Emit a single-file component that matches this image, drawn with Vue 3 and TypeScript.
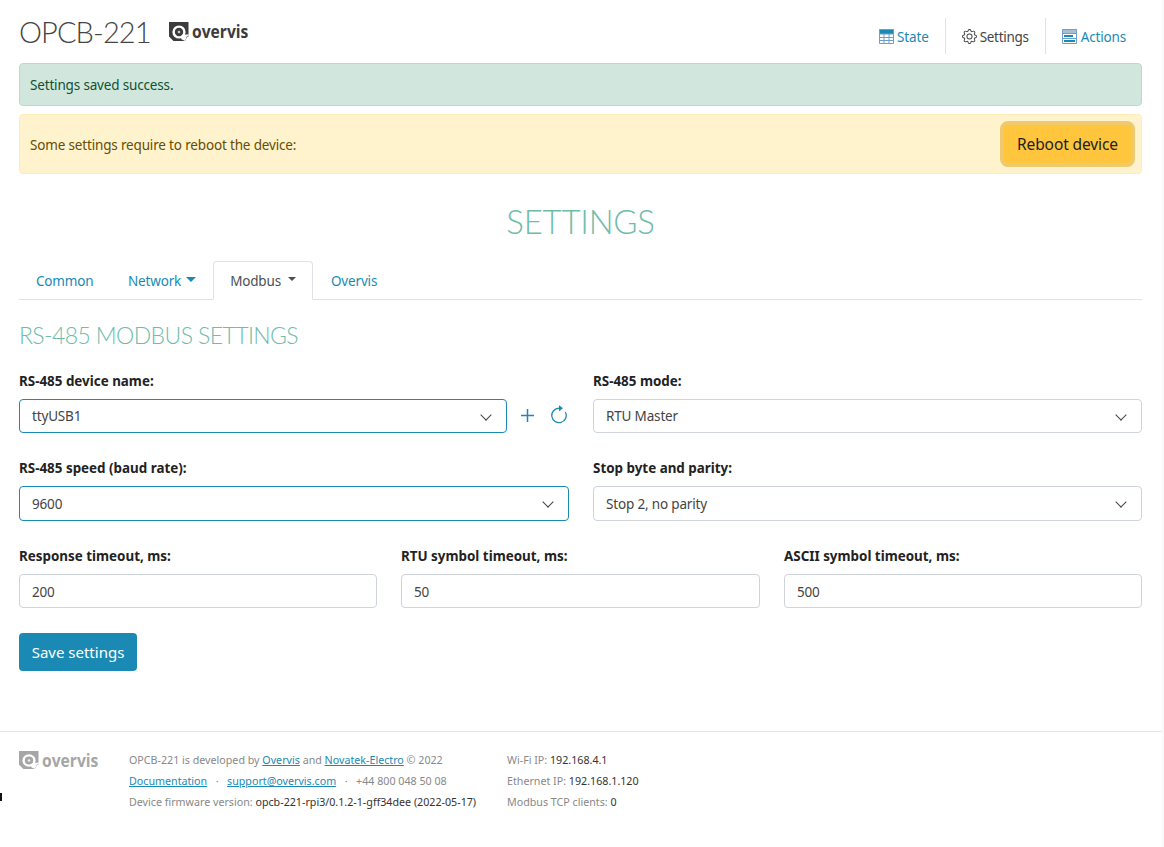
<script setup lang="ts">
const tabs = [
  { label: 'Common', drop: false, active: false },
  { label: 'Network', drop: true, active: false },
  { label: 'Modbus', drop: true, active: true },
  { label: 'Overvis', drop: false, active: false },
]
</script>

<template>
  <div class="page">
    <div class="main">
      <header class="topbar">
        <div class="brand">
          <span class="title">OPCB-221</span>
          <span class="logo">
            <svg viewBox="0 0 20 19" width="20" height="19">
              <path fill="#3c3c3c" d="M0 0h19.5v14.5h-1.2L16 19H4.5L0 14.5z" />
              <circle cx="10" cy="10" r="6.6" fill="#fff" />
              <path fill="#fff" d="M14 13l5.6-.8v1.6l-1.6.2-2 5-4-2z" />
              <circle cx="10" cy="10" r="4.2" fill="#3c3c3c" />
              <circle cx="10" cy="10" r="1.3" fill="#ccc" />
            </svg>
            <span class="logo-word">overvis</span>
          </span>
        </div>
        <nav class="topnav">
          <a class="topnav-item link">
            <svg viewBox="0 0 15 15" width="15" height="15"><path fill="#1a8ab5" d="M0 .5h15V5H0z"/><path fill="none" stroke="#6f9fc8" d="M.5.5h14v14H.5zM.5 5h14M.5 8.5h14M.5 11.5h14M5 5v9.5M10 5v9.5"/></svg>
            State
          </a>
          <a class="topnav-item current">
            <svg viewBox="0 0 16 16" width="15" height="15" fill="#444">
              <path d="M8 4.754a3.246 3.246 0 1 0 0 6.492 3.246 3.246 0 0 0 0-6.492zM5.754 8a2.246 2.246 0 1 1 4.492 0 2.246 2.246 0 0 1-4.492 0z"/>
              <path d="M9.796 1.343c-.527-1.79-3.065-1.79-3.592 0l-.094.319a.873.873 0 0 1-1.255.52l-.292-.16c-1.64-.892-3.433.902-2.54 2.541l.159.292a.873.873 0 0 1-.52 1.255l-.319.094c-1.79.527-1.79 3.065 0 3.592l.319.094a.873.873 0 0 1 .52 1.255l-.16.292c-.892 1.64.901 3.434 2.541 2.54l.292-.159a.873.873 0 0 1 1.255.52l.094.319c.527 1.79 3.065 1.79 3.592 0l.094-.319a.873.873 0 0 1 1.255-.52l.292.16c1.64.893 3.434-.902 2.54-2.541l-.159-.292a.873.873 0 0 1 .52-1.255l.319-.094c1.79-.527 1.79-3.065 0-3.592l-.319-.094a.873.873 0 0 1-.52-1.255l.16-.292c.893-1.64-.902-3.433-2.541-2.54l-.292.159a.873.873 0 0 1-1.255-.52l-.094-.319zm-2.633.283c.246-.835 1.428-.835 1.674 0l.094.319a1.873 1.873 0 0 0 2.693 1.115l.291-.16c.764-.415 1.6.42 1.184 1.185l-.159.292a1.873 1.873 0 0 0 1.116 2.692l.318.094c.835.246.835 1.428 0 1.674l-.319.094a1.873 1.873 0 0 0-1.115 2.693l.16.291c.415.764-.42 1.6-1.185 1.184l-.291-.159a1.873 1.873 0 0 0-2.693 1.116l-.094.318c-.246.835-1.428.835-1.674 0l-.094-.319a1.873 1.873 0 0 0-2.692-1.115l-.292.16c-.764.415-1.6-.42-1.184-1.185l.159-.291A1.873 1.873 0 0 0 1.945 8.93l-.319-.094c-.835-.246-.835-1.428 0-1.674l.319-.094A1.873 1.873 0 0 0 3.06 4.377l-.16-.292c-.415-.764.42-1.6 1.185-1.184l.292.159a1.873 1.873 0 0 0 2.692-1.115l.094-.319z"/>
            </svg>
            Settings
          </a>
          <a class="topnav-item link wide">
            <svg viewBox="0 0 15 15" width="15" height="15"><path fill="#a9bdd3" d="M.5.5h14v4H.5z"/><path fill="none" stroke="#6f9fc8" d="M.5.5h14v14H.5zM.5 4.5h14M.5 9.5h14"/><path fill="#1a8ab5" d="M2 6h9v2H2zM2 11h11v2H2z"/></svg>
            Actions
          </a>
        </nav>
      </header>

      <div class="alert success">Settings saved success.</div>
      <div class="alert warning">
        <span class="warn-text">Some settings require to reboot the device:</span>
        <button class="reboot" type="button">Reboot device</button>
      </div>

      <h1 class="page-title">SETTINGS</h1>

      <ul class="tabs">
        <li v-for="t in tabs" :key="t.label" class="tab" :class="{ active: t.active }">
          {{ t.label }}<span v-if="t.drop" class="caret"></span>
        </li>
      </ul>

      <h2 class="section">RS-485 MODBUS SETTINGS</h2>

      <form class="form" @submit.prevent>
        <div class="row two">
          <div class="field">
            <label>RS-485 device name:</label>
            <div class="with-actions">
              <div class="control select focus">ttyUSB1</div>
              <svg class="act" viewBox="0 0 13 13" width="13" height="13"><path fill="none" stroke="#1a8ab5" stroke-width="1.5" d="M6.5 0v13M0 6.5h13"/></svg>
              <svg class="act refresh" viewBox="2 0 12 14.5" width="16" height="19" fill="#1a8ab5">
                <path d="M8 3a5 5 0 1 0 4.546 2.914.5.5 0 0 1 .908-.417A6 6 0 1 1 8 2v1z"/>
                <path d="M8 4.466V.534a.25.25 0 0 1 .41-.192l2.36 1.966c.12.1.12.284 0 .384L8.41 4.658A.25.25 0 0 1 8 4.466z"/>
              </svg>
            </div>
          </div>
          <div class="field">
            <label>RS-485 mode:</label>
            <div class="control select">RTU Master</div>
          </div>
        </div>
        <div class="row two">
          <div class="field">
            <label>RS-485 speed (baud rate):</label>
            <div class="control select focus">9600</div>
          </div>
          <div class="field">
            <label>Stop byte and parity:</label>
            <div class="control select">Stop 2, no parity</div>
          </div>
        </div>
        <div class="row three">
          <div class="field">
            <label>Response timeout, ms:</label>
            <div class="control">200</div>
          </div>
          <div class="field">
            <label>RTU symbol timeout, ms:</label>
            <div class="control">50</div>
          </div>
          <div class="field">
            <label>ASCII symbol timeout, ms:</label>
            <div class="control">500</div>
          </div>
        </div>
        <button class="save" type="submit">Save settings</button>
      </form>
    </div>

    <footer class="footer">
      <span class="logo foot-logo">
        <svg viewBox="0 0 20 19" width="20" height="18" preserveAspectRatio="none">
          <path fill="#a6a6a6" d="M0 0h19.5v14.5h-1.2L16 19H4.5L0 14.5z" />
          <circle cx="10" cy="10" r="6.6" fill="#fff" />
          <path fill="#fff" d="M14 13l5.6-.8v1.6l-1.6.2-2 5-4-2z" />
          <circle cx="10" cy="10" r="4.2" fill="#a6a6a6" />
          <circle cx="10" cy="10" r="1.3" fill="#eee" />
        </svg>
        <span class="logo-word">overvis</span>
      </span>
      <div class="foot-col first">
        <p>OPCB-221 is developed by <a>Overvis</a> and <a>Novatek-Electro</a> © 2022</p>
        <p><a>Documentation</a><span class="dot">·</span><a>support@overvis.com</a><span class="dot">·</span>+44 800 048 50 08</p>
        <p>Device firmware version: <b>opcb-221-rpi3/0.1.2-1-gff34dee (2022-05-17)</b></p>
      </div>
      <div class="foot-col">
        <p>Wi-Fi IP: <b>192.168.4.1</b></p>
        <p>Ethernet IP: <b>192.168.1.120</b></p>
        <p>Modbus TCP clients: <b>0</b></p>
      </div>
    </footer>
    <span class="stray"></span>
  </div>
</template>

<style>
html, body { margin: 0; background: #f9f9f9; }
</style>

<style scoped>
.page {
  position: relative;
  min-height: 847px;
  width: 1162px;
  box-sizing: border-box;
  background: #fff;
  font-family: "Noto Sans", "Open Sans", sans-serif;
  font-size: 13.5px;
  letter-spacing: -.165px;
  color: #333;
}
.main { padding: 0 20px 0 19px; }
.topbar { display: flex; justify-content: space-between; height: 63px; }
.brand { display: flex; align-items: center; gap: 18px; height: 63px; }
.title { font-family: Lato, sans-serif; font-weight: 300; font-size: 29px; letter-spacing: -.9px; color: #444; }
.logo { display: inline-flex; align-items: center; gap: 3px; }
.logo-word { display: inline-block; font-family: "Open Sans", sans-serif; font-weight: 700; font-size: 17px; letter-spacing: 0; color: #3c3c3c; transform: scaleX(.92); transform-origin: left center; }
.topnav { display: flex; align-items: center; padding-top: 18px; height: 36px; }
.topnav-item { box-sizing: border-box; display: flex; align-items: center; gap: 3px; height: 36px; padding: 1px 16px 0; }
.topnav-item.wide { gap: 4px; }
.topnav-item + .topnav-item { border-left: 1px solid #e2e2e2; }
.link { color: #1a8ab5; }
.current { color: #444; letter-spacing: -.29px; }
.alert { box-sizing: border-box; border: 1px solid; border-radius: 4px; padding: 0 10px; display: flex; align-items: center; justify-content: space-between; }
.success { height: 43px; background: #d1e7dd; border-color: #badbcc; color: #0f5132; }
.warning { height: 60px; margin-top: 8px; background: #fff3cd; border-color: #ffecb5; color: #664d03; padding-right: 6px; }
.warn-text { padding-top: 2px; }
.reboot { box-sizing: border-box; width: 135px; height: 46px; background: #ffc53d; border: 4px solid #eeca6c; border-radius: 8px; font: inherit; font-size: 15.5px; letter-spacing: -.1px; color: #222; }
.page-title { margin: 26px 0 0; height: 61px; text-align: center; font-family: Lato, sans-serif; font-weight: 300; font-size: 33px; line-height: 42px; letter-spacing: -.25px; color: #6fbcaa; }
.tabs { display: flex; list-style: none; margin: 0; padding: 0; height: 38px; border-bottom: 1px solid #dee2e6; }
.tab { box-sizing: border-box; height: 39px; padding: 0 16px; display: flex; align-items: center; color: #1a8ab5; border: 1px solid transparent; border-radius: 4px 4px 0 0; }
.tab:nth-child(2) { margin-left: .5px; }
.tab.active { color: #495057; background: #fff; border-color: #dee2e6 #dee2e6 #fff; margin-right: 1px; }
.caret { display: inline-block; margin-left: 5px; margin-top: -3px; border-top: 5px solid currentColor; border-left: 5px solid transparent; border-right: 5px solid transparent; }
.tab.active .caret { margin-left: 7px; border-top-width: 4.5px; border-left-width: 4.5px; border-right-width: 4.5px; }
.section { margin: 20px 0 0; height: 30px; font-family: Lato, sans-serif; font-weight: 300; font-size: 23px; line-height: 30px; letter-spacing: -.6px; color: #6fbcaa; }
.form { margin-top: 21.5px; }
.row { display: grid; gap: 24px; margin-bottom: 26px; }
.row.two { grid-template-columns: 550px 549px; }
.row.three { grid-template-columns: 358px 359px 358px; margin-bottom: 24.5px; }
.row.three .control { padding-top: 2px; }
.field { min-width: 0; }
.field label { display: block; font-weight: 700; font-size: 13.4px; letter-spacing: 0; height: 18px; line-height: 18px; margin-bottom: 9px; color: #222; }
.control { box-sizing: border-box; flex: 1; height: 34.5px; border: 1px solid #ced4da; border-radius: 4px; padding: 1px 12px 0; display: flex; align-items: center; color: #444; position: relative; background: #fff; }
.select::after { content: ""; position: absolute; right: 16px; top: 11px; width: 7px; height: 7px; border-right: 1.6px solid #444; border-bottom: 1.6px solid #444; transform: rotate(45deg); }
.focus { border-color: #1a8ab5; }
.with-actions { display: flex; align-items: center; gap: 14px; }
.act { flex: none; }
.refresh { margin-left: 3px; margin-right: 2px; margin-top: -2px; }
.save { display: block; box-sizing: border-box; width: 118px; height: 38px; background: #1a8ab5; color: #fff; border: 0; border-radius: 4px; font: inherit; font-size: 15px; letter-spacing: 0; }
.footer { position: absolute; left: 0; right: 0; top: 731px; box-sizing: border-box; border-top: 1px solid #e4e4ea; display: flex; padding: 18px 19px 0; font-size: 10.7px; letter-spacing: 0; color: #888; }
.foot-logo { width: 110px; height: 20px; align-self: flex-start; flex: none; }
.foot-logo .logo-word { color: #a6a6a6; }
.foot-col.first { width: 378px; flex: none; }
.foot-col p { margin: 0; height: 21px; line-height: 21px; white-space: nowrap; }
.foot-col a { color: #1a8ab5; text-decoration: underline; }
.foot-col b { font-weight: 400; color: #333; }
.dot { margin: 0 8.5px; }
.stray { position: absolute; left: 0; top: 793px; width: 2px; height: 8px; background: #111; }
</style>
